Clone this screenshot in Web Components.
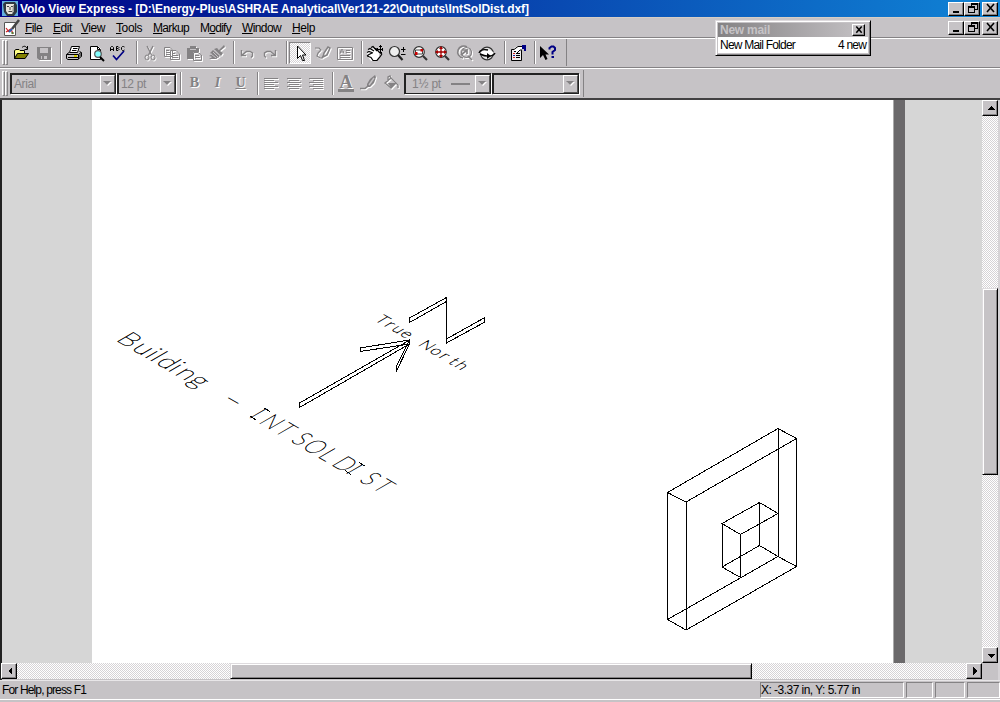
<!DOCTYPE html>
<html lang="en"><head><meta charset="utf-8"><title>Volo View Express</title>
<style>html,body{margin:0;width:1000px;height:702px;overflow:hidden;background:#c6c3c6;font:12px/14px "Liberation Sans",Arial,sans-serif;color:#000}</style></head>
<body><volo-app></volo-app>
<script>
const define=(name,css,html,init)=>customElements.define(name,class extends HTMLElement{
  connectedCallback(){if(this.shadowRoot)return;const r=this.attachShadow({mode:'open'});
    r.innerHTML='<style>*{box-sizing:border-box}'+css+'</style>'+(typeof html==='function'?html(this):html);if(init)init(this,r);}});

/* Label whose letter spacing is adjusted to fill a given width */
define('fit-text',':host{display:inline-block;white-space:pre;flex:none}','<span><slot></slot></span>',(e,r)=>{
  const w=+e.getAttribute('w'),s=r.querySelector('span'),n=e.textContent.length;
  if(w){const m=s.getBoundingClientRect().width;e.style.letterSpacing=((w-m)/n)+'px';e.style.width=w+'px';}});

const G='#848284';
const line=(d,c='#000',w=1,x='')=>`<path d="${d}" fill="none" stroke="${c}" stroke-width="${w}" ${x}/>`;
const fill=(d,c='#000',x='')=>`<path d="${d}" fill="${c}" ${x}/>`;
const lens=(c,inner='')=>`<circle cx="7" cy="7" r="5.300" fill="#fff" stroke="${c}" stroke-width="1.200"/>`+line('M11 11L15 15',c,2.2)+inner;
const emboss=s=>`<g transform="translate(1 1)">${s.replaceAll(G,'#fff')}</g>${s}`;
const icons={
open:fill('M1 13V5h1l1-1h3l1 1h5v3h-2H4z','#ffff84')+fill('M1 14L4.500 8H16l-4 6z','#848200')+line('M1.500 13.500V5.500L3 4.500H6L7 5.500H11.500V8M1.500 13.500L4.500 8.500H15.500L12 13.500zM9 2.500C11 .5 13 1 14 3.500M14.500 1V4.500H11.500'),
save:emboss(fill('M1 2H15V15H3L1 13z',G)+fill('M4 3h8v5H4z','#c6c3c6')+fill('M5 11h6v3H5z','#c6c3c6')+fill('M6 11h2v3H6z',G)),
print:fill('M1 9L4 7H13L15 8V12L12 15H2L1 14z','#c6c3c6')+fill('M5.500 1.500H13.500L11.500 7.500H3.500z','#fff')+line('M5.500 1.500H13.500L11.500 7.500H3.500zM7 3.500H11.500M6 5.500H10.500M3 7.500L.5 9.500V13.500L2 14.500H12L15.500 11.500V7.500L13.500 6.500M.5 9.500H12.500L15 7.500M12.500 10V14M2 12.500H12')+fill('M8 10h3v2H8z','#d8d000')+fill('M13 10L15 8V12L13 14z','#666'),
preview:fill('M2 1H10L13 4V14H2z','#fff')+line('M2.500 1.500H9.500L12.500 4.500V14.500H2.500zM9.500 1.500V4.500H12')+`<circle cx="10" cy="9" r="3.300" fill="#84ffff" stroke="#555" stroke-width="1.200"/>`+line('M12 12L16 16','#000',2),
spell:line('M.5 6V2.500L1.500 1.500H2.500L3.500 2.500V6M1 4.500H3M6.500 5.500V1.500H8L9 2.500L8 3.500H6.500M8 3.500L9 4.500L8 5.500H6.500M14.500 2L13.500 1.500H12.500L11.500 2.500V4.500L12.500 5.500H13.500L14.500 5')+line('M3 10.500L6.500 14.500L14 6','#000084',1.700),
cut:emboss(line('M5 1L9.500 10M11 1L6.500 10',G,1.300)+`<ellipse cx="5" cy="12.500" rx="2" ry="2.500" fill="none" stroke="${G}"/><ellipse cx="11" cy="12.500" rx="2" ry="2.500" fill="none" stroke="${G}"/>`),
copy:emboss(line('M.5 2.500H6L8.500 5V11.500H.5zM6.500 5.500H12L15.500 9V14.500H6.500zM2 5.500H5M2 7.500H6M2 9.500H6M8 8.500H11M8 10.500H14M8 12.500H14',G)),
paste:emboss(fill('M1 3H4V1H10V3H13V7H7V14H1z',G)+line('M7.500 7.500H12L15.500 10V15.500H7.500zM9 10.500H13M9 12.500H14',G)+line('M4 4.500H10','#c6c3c6')),
fmt:emboss(fill('M15 0L16 2L11 6L14 8L12 11L5 4L8 3L10 5z',G)+fill('M4 5L11 11L7 14L0 14L3 12L0 11L3 9L1 8z',G)+line('M2 9L7 13M4 7L9 12','#c6c3c6')),
undo:emboss(line('M2.500 5V10.500H7M3 10L7.500 6.500H11L13.500 8V11L12 12.500',G,1.400)),
redo:emboss(line('M13.500 5V10.500H9M13 10L8.500 6.500H5L2.500 8V11L4 12.500',G,1.400)),
arrow:fill('M6 1V13L8.500 10.500L10.500 15H12.500L10.500 10H14z','#fff')+line('M5.500 1V13.500L8.500 10.500L10.500 15.500H12.500L10.500 10H14z'),
pen:emboss(line('M0 3H4L6 5L3 8L2 11L5 13H7L8 11',G,1.200)+line('M8 12L9 8L13 2L15 3L12 10z',G,1.500)),
note:emboss(line('M.5 2.500H15.500V14.500H.5zM3 8.500L4.500 4.500H5.500L7 8.500M3.500 7H6.500M9 5.500H13M9 7.500H13M3 10.500H13M3 12.500H13',G)),
pan:fill('M0 7L2 5L4 4L7 3L10 5L12 6V12L9 16H4L1 12z','#fff')+line('M1 4.500L3 3.500L7 6M0 7.500L2 6.500L6 8M4 2.500L6 1.500L10 6M7 3.500L9 3.500L12 7L15 9M5 8L2 9.500L0 11M0 11L4 12.500L6 15.500H10L12.500 12.500L15 9','#000',1.200)+line('M13.500 0V8M10 4.500H16')+line('M12 1.500H15M12 7.500H15M10.500 3V6M15.500 3V6'),
zoom:`<circle cx="5.500" cy="6.500" r="5" fill="#eee" stroke="#333" stroke-width="1.200"/>`+line('M9 10L13.500 15','#222',2.200)+line('M12 4.500H16.500M14.500 2V7M12 9.500H16.500'),
zoomw:lens('#333',line('M3.500 5H10.500V9H3.500z','#444')+fill('M3 7H5.500V10H3zM8.500 4H11V6.500H8.500z','#c00')),
zoome:lens('#333',line('M7 2V12M2 7H12','#a00000',1.300)+fill('M7 1L5 4H9zM7 13L5 10H9zM1 7L4 5V9zM13 7L10 5V9z','#a00')),
zoomp:emboss(line('M10 2A6 6 0 1 0 6 13M11 11L15 15',G,1.700)+`<circle cx="9.500" cy="7.500" r="5" fill="none" stroke="${G}" stroke-width="1.200"/>`+line('M4 10L10 5V9M10 5H6',G,1.700)),
orbit:`<circle cx="8" cy="8.500" r="6.300" fill="#e6e6e6" stroke="#333" stroke-width="1.200"/>`+fill('M1 8C4 4 12 4 15 8C12 11 5 11 1 8z','#fff')+line('M0 8C1 5 5 4 9 5M16 8C14 12 7 12 1 9','#000',1.400)+fill('M8 8L12 11L8 14z'),
props:fill('M1 5H12V15H1z','#eee')+line('M1.500 4.500H11.500V15.500H1.500zM6 8.500H10M6 10.500H10M6 12.500H10')+line('M3 8.500H5M3 12.500H5','#d02020')+line('M3 10.500H5','#2020a0')+fill('M4 3L8 1H12V5L9 6L7 8L4 6z','#fff')+line('M4 4.500L8 1.500H12M4 6.500H6M7 8L10 5H12')+fill('M12 0H16V6H14V4H12z','#000084'),
help:fill('M0 1V13L3 10L5.500 15L7.500 14L5.500 9.500H9z')+line('M9.500 4.500V3L11.500 1.500H13.500L15 3V5L12.500 7V9.500','#000084',2)+fill('M11.500 11H14V13H11.500z','#000084'),
al:emboss(line('M1 3.500H15M1 5.500H11M1 7.500H15M1 9.500H11M1 11.500H15M1 13.500H11',G)),
ac:emboss(line('M1 3.500H15M3 5.500H13M1 7.500H15M3 9.500H13M1 11.500H15M3 13.500H13',G)),
ar:emboss(line('M1 3.500H15M5 5.500H15M1 7.500H15M5 9.500H15M1 11.500H15M5 13.500H15',G)),
brush:emboss(fill('M15 0L16 2L14 8L10 12H7L7 9L10 4z',G)+line('M0 13.500H5L8 11',G,1.500)+line('M9 10L14 3','#c6c3c6',1.400)),
bucket:emboss(line('M2 8L8 3L13 8L8 13zM5 6V2L7 1L8 4M13 8L15 10V13',G,1.300)+fill('M5 8H13L8 13z',G)),
app:fill('M0 0H16V15H0z','#63aede')+fill('M1 3L3 1H13L15 4V11L12 15H5L2 11z','#303840')+fill('M4 3H12V10L10 13H6L4 10z','#e8e4dc')+line('M5 5.500H7M9 5.500H11M8 6V9M6.500 10.500H10','#444')+fill('M11 4H12V10L10 13z','#9a9896'),
doc:fill('M0 2H10L12 4V16H0z','#fff')+line('M.5 2.500H11.500V15.500H.5z','#555')+line('M2 8L5 12M2 12L7 9L9 14','#d02020',1.200)+line('M15 0L8 9','#444',2.500)+line('M8 9L5 12','#3060b0',2)+line('M7 13H10','#209030')
};
define('x-icon',':host{display:flex;align-items:center;justify-content:center;width:22.4px;height:22px;flex:none}:host([on]){border:1px solid;border-color:#848284 #fff #fff #848284;background:repeating-conic-gradient(#fff 0 25%,#d6d3d6 0 50%) 0 0/2px 2px}:host([sz]){width:16px;height:16px}svg{display:block;overflow:visible}',
 e=>`<svg width="16" height="16" viewBox="0 0 16 16">${icons[e.getAttribute('n')]}</svg>`);
define('x-sep',':host{display:block;flex:none;width:8px;height:23px}i{display:block;width:2px;height:100%;margin-left:5px;background:linear-gradient(90deg,#848284 50%,#fff 50%)}','<i></i>');
define('tool-bar',':host{display:flex;align-items:center;flex:none;border-right:1px solid #848284;height:27px;padding-left:2px}b{width:3px;height:25px;border:1px solid;border-color:#fff #848284 #848284 #fff;flex:none}b+b{margin-right:2px}','<b></b><b></b><slot></slot>');
define('tool-group',':host{display:flex;flex:none;align-items:center}','<slot></slot>');
define('text-glyph',':host{display:block;width:23px;text-align:center;font:bold 14px/16px "Liberation Serif",serif;color:#848284;text-shadow:1px 1px #fff;flex:none}','<slot></slot>');
define('combo-box',':host{display:flex;flex:none;height:21px;border:2px solid #222;border-right-width:1px;border-bottom-width:1px;box-shadow:1px 1px #fff;color:#848284;align-items:center;padding-left:2px;font-size:12px;background:#c6c3c6}span{flex:1;display:flex;align-items:center}i{width:15px;height:18px;border:1px solid;border-color:#fff #555 #555 #fff;display:flex;align-items:center;justify-content:center}',
 '<span><slot></slot></span><i><svg width="9" height="6"><path d="M1 1H9L5 5z" fill="#fff"/><path d="M0 0H8L4 4z" fill="#848284"/></svg></i>');
const marks={min:'M3 9H9V11H3z',restore:'M5 1H12V8H9V11H2V4H5zM6 3V4H9V7H11V3zM3 6V10H8V6z',
 up:'M3 8H11L7 4z',down:'M3 5H11L7 9z',left:'M9 2V10L5 6z',right:'M5 2V10L9 6z'};
define('bevel-button',':host{display:flex;flex:none;width:16px;height:14px;background:#c6c3c6;border:1px solid;border-color:#fff #000 #000 #fff;box-shadow:inset -1px -1px #848284;align-items:center;justify-content:center}:host([s]){width:16px;height:16px}:host([tiny]){width:13px;height:12px}',
 e=>{const n=e.getAttribute('n'),t=e.hasAttribute('tiny')?10:13;
 return `<svg width="${t}" height="${t}" viewBox="0 0 13 13">`+(n==='close'?line('M3 2L10 10M10 2L3 10','#000',e.hasAttribute('tiny')?2:1.600):`<path d="${marks[n]}" fill-rule="evenodd" shape-rendering="crispEdges"/>`)+'</svg>'});
define('window-buttons',':host{display:flex;margin-left:auto;margin-right:2px}bevel-button:last-child{margin-left:2px}','<bevel-button n="min"></bevel-button><bevel-button n="restore"></bevel-button><bevel-button n="close"></bevel-button>');
define('title-bar',':host{display:flex;align-items:center;height:17px;flex:none;background:linear-gradient(90deg,#000084,#1084d6);color:#fff;font-weight:bold;padding-left:2px;gap:2px}','<x-icon n="app" sz></x-icon><fit-text w="509">Volo View Express - [D:\\Energy-Plus\\ASHRAE Analytical\\Ver121-22\\Outputs\\IntSolDist.dxf]</fit-text><window-buttons></window-buttons>');
define('menu-bar',':host{display:flex;align-items:center;height:20px;flex:none;padding-left:4px;border-top:1px solid #d6cec6}u{text-decoration-thickness:1px;text-underline-offset:1px}div{display:grid;grid-template-columns:28px 28px 35px 37px 47px 42px 50px 30px;margin-left:5px}',
 '<x-icon n="doc" sz></x-icon><div>'+[['<u>F</u>ile',17],['<u>E</u>dit',19],['<u>V</u>iew',24],['<u>T</u>ools',26],['<u>M</u>arkup',36],['M<u>o</u>dify',31],['<u>W</u>indow',39],['<u>H</u>elp',23]].map(a=>`<fit-text w="${a[1]}">${a[0]}</fit-text>`).join('')+'</div><window-buttons></window-buttons>');
define('tool-bars',':host{display:flex;flex-direction:column;height:63px;flex:none;border-top:1px solid #848284;border-bottom:2px solid #424142;background:#c6c3c6}section{display:flex;height:30px;border-top:1px solid #fff}section+section{border-top:0;box-shadow:inset 0 1px #848284,inset 0 2px #fff;padding-top:1px;align-items:center;margin-top:-1px;height:31px}',()=>{
 const I=(w,...n)=>`<tool-group style="width:${w}px">${n.map(x=>`<x-icon n="${x}"></x-icon>`).join('')}</tool-group>`;
 return `<section><tool-bar style="width:567px">${I(44.5,'open','save')}<x-sep></x-sep>${I(68,'print','preview','spell')}<x-sep></x-sep>${I(89.500,'cut','copy','paste','fmt')}<x-sep></x-sep>${I(45,'undo','redo')}<x-sep></x-sep><x-icon n="arrow" on></x-icon>${I(44.500,'pen','note')}<x-sep></x-sep>${I(135,'pan','zoom','zoomw','zoome','zoomp','orbit')}<x-sep></x-sep>${I(22,'props')}<x-sep></x-sep>${I(22,'help')}</tool-bar></section>
 <section><tool-bar style="width:584px"><combo-box style="width:106px"><fit-text w="22">Arial</fit-text></combo-box><combo-box style="width:59px;margin-left:1px"><fit-text w="25">12 pt</fit-text></combo-box><x-sep style="margin-left:-1px"></x-sep><text-glyph>B</text-glyph><text-glyph style="font-style:italic">I</text-glyph><text-glyph style="text-decoration:underline">U</text-glyph><x-sep></x-sep>${I(68,'al','ac','ar')}<x-sep style="margin-left:-1px"></x-sep><text-glyph style="font-size:18px;line-height:14px;border-bottom:3px solid #848284;width:16px;margin:0 3px">A</text-glyph>${I(47,'brush','bucket')}<combo-box style="width:87px"><fit-text w="29" style="margin-left:4px">1½ pt</fit-text><svg width="20" height="4" style="margin-left:10px"><path d="M0 2H19" stroke="#848284" stroke-width="2"/></svg></combo-box><combo-box style="width:87px;margin-left:1px"></combo-box></tool-bar></section>`});
define('scroll-bar',':host{display:flex;flex:none;background:repeating-conic-gradient(#fff 0 25%,#d6d3d6 0 50%) 0 0/2px 2px}i{display:block;background:#c6c3c6;border:1px solid;border-color:#dedbde #000 #000 #dedbde;box-shadow:inset 1px 1px #fff,inset -1px -1px #848284}:host([v]){flex-direction:column;width:16px}:host([h]){height:16px}bevel-button:last-child{margin-left:auto}:host([v]) bevel-button:last-child{margin:auto 0 0}',
 e=>e.hasAttribute('v')?'<bevel-button s n="up"></bevel-button><i style="height:187px;margin-top:172px"></i><bevel-button s n="down"></bevel-button>':'<bevel-button s n="left"></bevel-button><i style="width:522px;margin-left:213px"></i><bevel-button s n="right"></bevel-button>');
define('cad-drawing',':host{display:block;width:801px;height:563px;background:#fff;overflow:hidden}svg{display:block}text{font-family:Lato,sans-serif;font-weight:100;fill:#000;stroke:#000;stroke-width:.6}',()=>{
 return `<svg width="802" height="563" viewBox="92 100 802 563" fill="none" stroke="#000">
 <g shape-rendering="crispEdges"><path d="M667.500 492.500L778 428.500L796.500 438.500V566.500L686 630L667.500 619.500zM667.500 492.500L686 502L796.500 438.500M686 502V630M778 428.500V556.500L667.500 619.500M778 556.500L796.500 566.500"/>
 <path d="M722 523.500L759.500 502.500L778 513.500L740.500 534.500zM722 523.500V567L740.500 577.500V534.500M759.500 502.500V545.500L722 567M759.500 545.500L778 556.500"/>
 <path d="M299.500 403L408 341L409.500 344L299.500 407.500zM409.500 340L360 348V351.500L409.500 344zM409.500 340L396 367V372L409.500 344zM409.500 339V344M409.500 318L446.500 297.500V339L484 318V322.500L446.500 343V301.500L409.500 322.500z"/></g>
 <text transform="matrix(.866 .5 -.866 .5 115 340)" font-size="26"><tspan x="0 18 33 39 46 60 68 83">Building</tspan></text>
 <text transform="matrix(.693 .4 -.866 .5 115 340)" font-size="26"><tspan x="192 206 228 252 268 291 311 331 351 369">INTSOLDIST</tspan></text>
 <text transform="matrix(1.6 .924 -.866 .5 219 400)" font-size="26" x="0">-</text>
 <path d="M250 416L256 420M264 408L270 411.500M345 470.500L351 474.500M359 462.500L365 466" shape-rendering="crispEdges"/>
 <text transform="matrix(.866 .5 -.866 .5 374 320)" font-size="16"><tspan x="0 11 19 29">True</tspan><tspan x="50 63 74 85 92">North</tspan></text></svg>`});
define('work-area',':host{display:flex;flex-direction:column;height:580px;flex:none;border-left:2px solid #222;border-right:2px solid #d6d3d6}div{display:flex;height:564px;padding-bottom:1px;margin-bottom:-1px}main{display:flex;flex:1;background:#d6d6d6;padding-left:90px}aside{width:12px;background:#6b696b;border-left:1px solid #aaa}footer{display:flex;height:17px;background:#c6c3c6}scroll-bar[h]{width:981px;margin-left:-1px}',
 '<div><main><cad-drawing></cad-drawing><aside></aside></main><scroll-bar v></scroll-bar></div><footer><scroll-bar h></scroll-bar></footer>');
define('status-bar',':host{display:flex;height:22px;flex:none;border-top:1px solid #e8e6e8;padding:0 0 3px 2px;box-shadow:inset 0 -2px #c6c3c6,inset 0 -3px #fff;align-items:center}span{height:16px;border:1px solid;border-color:#848284 #fff #fff #848284;flex:none;margin-right:2px;display:flex;align-items:center}span:first-of-type{margin-left:auto}',
 '<fit-text w="84">For Help, press F1</fit-text><span style="width:144px"><fit-text w="99">X: -3.37 in, Y: 5.77 in</fit-text></span><span style="width:27px"></span><span style="width:30px"></span><span style="width:33px;margin:0"></span>');
define('mail-popup',':host{position:absolute;left:715px;top:20px;width:156px;height:36px;border:1px solid;border-color:#dedbde #000 #000 #dedbde;box-shadow:inset 1px 1px #fff,inset -1px -1px #848284;background:#c6c3c6;padding:2px}header{display:flex;height:14px;align-items:center;justify-content:space-between;padding:0 3px 0 2px;background:linear-gradient(90deg,#848284,#c6c3c6);color:#c6c3c6;font-weight:bold}div{display:flex;height:16px;background:#fff;align-items:center;justify-content:space-between;padding:0 2px}',
 '<header><fit-text w="50">New mail</fit-text><bevel-button tiny n="close"></bevel-button></header><div><fit-text w="75">New Mail Folder</fit-text><fit-text w="28">4 new</fit-text></div>');
define('volo-app',':host{display:flex;flex-direction:column;width:1000px;height:702px;background:#c6c3c6}','<title-bar></title-bar><menu-bar></menu-bar><tool-bars></tool-bars><work-area></work-area><status-bar></status-bar><mail-popup></mail-popup>');
</script></body></html>
